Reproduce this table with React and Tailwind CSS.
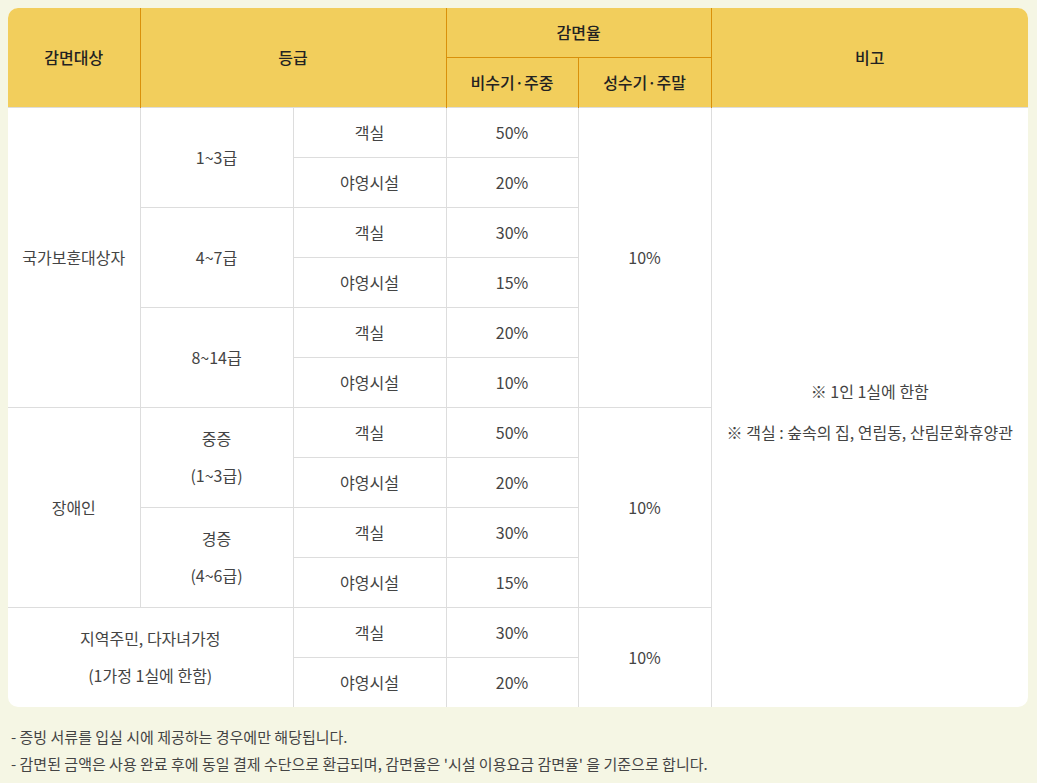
import React from "react";

const H = "border border-[#d9900a] text-[16px] font-medium text-[#222] text-center align-middle";
const B = "border border-[#dddddd] text-[16px] text-[#444] text-center align-middle";

export default function App() {
  const font = { fontFamily: '"Noto Sans CJK KR", "Noto Sans", sans-serif' };
  return (
    <div className="min-h-[783px] w-[1037px] bg-[#f5f6e4] p-2" style={font}>
      <div className="w-[1020px] rounded-[10px] overflow-hidden bg-white">
        <table className="w-full table-fixed border-collapse border-hidden">
          <colgroup>
            <col className="w-[132px]" />
            <col className="w-[153px]" />
            <col className="w-[153px]" />
            <col className="w-[132px]" />
            <col className="w-[133px]" />
            <col />
          </colgroup>
          <thead className="bg-[#f2ce5c]">
            <tr className="h-[49px]">
              <th rowSpan={2} className={H + " border-b-0"}>감면대상</th>
              <th rowSpan={2} colSpan={2} className={H + " border-b-0"}>등급</th>
              <th colSpan={2} className={H}>감면율</th>
              <th rowSpan={2} className={H + " border-b-0"}>비고</th>
            </tr>
            <tr className="h-[50px]">
              <th className={H + " border-b-0"}>비수기·주중</th>
              <th className={H + " border-b-0"}>성수기·주말</th>
            </tr>
          </thead>
          <tbody>
            <tr className="h-[50px]">
              <td rowSpan={6} className={B}>국가보훈대상자</td>
              <td rowSpan={2} className={B}>1~3급</td>
              <td className={B}>객실</td>
              <td className={B}>50%</td>
              <td rowSpan={6} className={B}>10%</td>
              <td rowSpan={12} className={B + " pt-[9px]"}>
                <p className="leading-[24px]">※ 1인 1실에 한함</p>
                <p className="leading-[24px] mt-[17px]">※ 객실 : 숲속의 집, 연립동, 산림문화휴양관</p>
              </td>
            </tr>
            <tr className="h-[50px]">
              <td className={B}>야영시설</td>
              <td className={B}>20%</td>
            </tr>
            <tr className="h-[50px]">
              <td rowSpan={2} className={B}>4~7급</td>
              <td className={B}>객실</td>
              <td className={B}>30%</td>
            </tr>
            <tr className="h-[50px]">
              <td className={B}>야영시설</td>
              <td className={B}>15%</td>
            </tr>
            <tr className="h-[50px]">
              <td rowSpan={2} className={B}>8~14급</td>
              <td className={B}>객실</td>
              <td className={B}>20%</td>
            </tr>
            <tr className="h-[50px]">
              <td className={B}>야영시설</td>
              <td className={B}>10%</td>
            </tr>
            <tr className="h-[50px]">
              <td rowSpan={4} className={B}>장애인</td>
              <td rowSpan={2} className={B + " leading-[37px]"}>중증<br />(1~3급)</td>
              <td className={B}>객실</td>
              <td className={B}>50%</td>
              <td rowSpan={4} className={B}>10%</td>
            </tr>
            <tr className="h-[50px]">
              <td className={B}>야영시설</td>
              <td className={B}>20%</td>
            </tr>
            <tr className="h-[50px]">
              <td rowSpan={2} className={B + " leading-[37px]"}>경증<br />(4~6급)</td>
              <td className={B}>객실</td>
              <td className={B}>30%</td>
            </tr>
            <tr className="h-[50px]">
              <td className={B}>야영시설</td>
              <td className={B}>15%</td>
            </tr>
            <tr className="h-[50px]">
              <td rowSpan={2} colSpan={2} className={B + " leading-[37px]"}>지역주민, 다자녀가정<br />(1가정 1실에 한함)</td>
              <td className={B}>객실</td>
              <td className={B}>30%</td>
              <td rowSpan={2} className={B}>10%</td>
            </tr>
            <tr className="h-[50px]">
              <td className={B}>야영시설</td>
              <td className={B}>20%</td>
            </tr>
          </tbody>
        </table>
      </div>
      <div className="mt-[16px] pl-[3px] text-[15px] leading-[27px] text-[#444]">
        <p>- 증빙 서류를 입실 시에 제공하는 경우에만 해당됩니다.</p>
        <p>- 감면된 금액은 사용 완료 후에 동일 결제 수단으로 환급되며, 감면율은 '시설 이용요금 감면율' 을 기준으로 합니다.</p>
      </div>
    </div>
  );
}
